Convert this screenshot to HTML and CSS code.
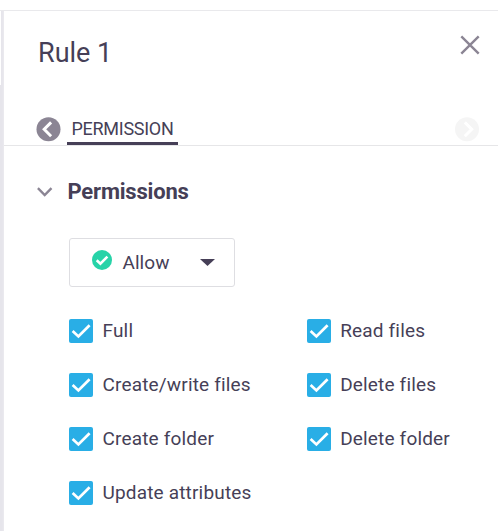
FILE: index.html
```
<!DOCTYPE html>
<html lang="en">
<head>
<meta charset="utf-8">
<title>Rule 1</title>
<link rel="stylesheet" href="styles.css">
</head>
<body>
<div class="page">
  <div class="gutter"><div class="gutter-card"></div></div>
  <main class="panel">
    <header class="header">
      <h1 class="title">Rule 1</h1>
      <svg class="close" viewBox="0 0 20 20"><path d="M1.3 1.3 18.7 18.7M18.7 1.3 1.3 18.7"/></svg>
    </header>
    <nav class="tabs">
      <svg class="nav-icon" viewBox="0 0 25 25"><circle cx="12.5" cy="12.3" r="12"/><path d="M15.1 5.4 8.2 12.3l6.9 6.9"/></svg>
      <span class="tab">PERMISSION</span>
      <svg class="nav-icon nav-next" viewBox="0 0 25 25"><circle cx="13" cy="12.3" r="12"/><path d="M10.8 5.4 17.7 12.3l-6.9 6.9"/></svg>
    </nav>
    <section class="section">
      <h2 class="section-title"><svg class="chevron" viewBox="0 0 16 10"><path d="M.9 1.2 7.7 8l6.8-6.8"/></svg><span>Permissions</span></h2>
      <div class="select">
        <svg class="status" viewBox="0 0 20 20"><circle cx="10" cy="10" r="10"/><path d="M4.7 10.2l3.7 3.5 7-7.1"/></svg>
        <span class="select-label">Allow</span>
        <svg class="caret" viewBox="0 0 15 7"><path d="M0 0h15L7.5 7z"/></svg>
      </div>
      <div class="options">
        <label class="option"><svg class="box" viewBox="0 0 24 24"><path d="M3.6 12l5.8 5.4L20.6 6.2"/></svg><span>Full</span></label>
        <label class="option"><svg class="box" viewBox="0 0 24 24"><path d="M3.6 12l5.8 5.4L20.6 6.2"/></svg><span>Read files</span></label>
        <label class="option"><svg class="box" viewBox="0 0 24 24"><path d="M3.6 12l5.8 5.4L20.6 6.2"/></svg><span>Create/write files</span></label>
        <label class="option"><svg class="box" viewBox="0 0 24 24"><path d="M3.6 12l5.8 5.4L20.6 6.2"/></svg><span>Delete files</span></label>
        <label class="option"><svg class="box" viewBox="0 0 24 24"><path d="M3.6 12l5.8 5.4L20.6 6.2"/></svg><span>Create folder</span></label>
        <label class="option"><svg class="box" viewBox="0 0 24 24"><path d="M3.6 12l5.8 5.4L20.6 6.2"/></svg><span>Delete folder</span></label>
        <label class="option"><svg class="box" viewBox="0 0 24 24"><path d="M3.6 12l5.8 5.4L20.6 6.2"/></svg><span>Update attributes</span></label>
      </div>
    </section>
  </main>
</div>
</body>
</html>
```
FILE: styles.css
```
* { box-sizing: border-box; }
body {
  margin: 0;
  padding-top: 10px;
  height: 531px;
  overflow: hidden;
  background: #fff;
  color: #463f57;
  font-family: Roboto, "Liberation Sans", sans-serif;
}
svg { display: block; flex: none; fill: none; }
.page { display: flex; height: 521px; border-top: 1px solid #e9e9ec; }
.gutter { width: 4px; background: linear-gradient(90deg, #e6e5eb 0 50%, #ebeaef); }
.gutter-card { width: 1px; height: 74px; background: #fff; }
.panel { flex: 1; }
.header { display: flex; justify-content: space-between; padding: 24px 18px 0 34px; height: 102px; }
.title { margin: 2px 0 0; font-size: 27px; line-height: 32px; font-weight: 400; }
.close { width: 20px; height: 20px; stroke: #8b8594; stroke-width: 2.4; }
.tabs { display: flex; height: 33px; padding: 0 19px 0 32px; box-shadow: inset 0 -1px #e6e6e8; }
.nav-icon { width: 25px; height: 25px; margin-top: 4px; fill: #8b8594; }
.nav-icon path { fill: none; stroke: #fff; stroke-width: 3; }
.nav-next { margin-left: auto; fill: #f5f5f5; }
.tab { margin-left: 6px; width: 111px; height: 32px; text-align: center; font-size: 18px; line-height: 31px; letter-spacing: -.28px; border-bottom: 3px solid #463f57; white-space: nowrap; }
.section-title { display: flex; align-items: center; gap: 15px; margin: 30px 0 0 32.5px; height: 32px; font-size: 22px; line-height: 32px; font-weight: 700; letter-spacing: -.2px; }
.chevron { width: 16px; height: 10px; stroke: #8b8594; stroke-width: 2.4; }
.select { display: flex; align-items: center; margin: 30px 0 0 65px; width: 166px; height: 49px; padding-left: 22px; border: 1px solid #dedee2; border-radius: 3px; }
.status { width: 20px; height: 20px; fill: #27d3a8; margin-bottom: 5px; }
.status path { fill: none; stroke: #fff; stroke-width: 2.6; }
.select-label { width: 77.5px; margin-left: 10.5px; font-size: 19px; letter-spacing: .05px; }
.caret { width: 15px; height: 7px; fill: #463f57; }
.options { display: grid; grid-template-columns: 237.7px 1fr; grid-auto-rows: 54px; margin: 17.3px 0 0 64.9px; }
.option { display: flex; align-items: center; gap: 9.6px; font-size: 19px; letter-spacing: .17px; font-variant-ligatures: none; white-space: nowrap; }
.option span { margin-top: -2px; }
.box { width: 24px; height: 24px; border-radius: 2px; background: #29aee6; stroke: #fff; stroke-width: 2.7; }
```
